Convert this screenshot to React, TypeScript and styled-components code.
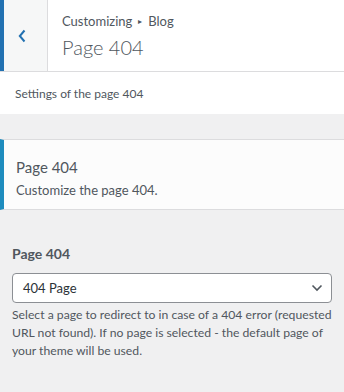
import React from "react";
import styled, { createGlobalStyle } from "styled-components";

const Global = createGlobalStyle`
  html, body { margin: 0; padding: 0; background: #f0f0f1; }
  body { font-family: Lato, "Noto Sans", sans-serif; color: #3c434a; }
  * { box-sizing: border-box; }
`;

const Panel = styled.div`
  width: 344px;
  height: 392px;
  background: #f0f0f1;
  display: flex;
  flex-direction: column;
`;

const Header = styled.div`
  display: flex;
  height: 72px;
  background: #fff;
  border-bottom: 1px solid #dcdcde;
`;

const BackButton = styled.div`
  width: 48px;
  background: #f6f7f7;
  border-left: 4px solid #2271b1;
  border-right: 1px solid #dcdcde;
  display: flex;
  align-items: center;
  justify-content: center;
  padding: 0 7px 0 0;
  color: #2271b1;
`;

const TitleBlock = styled.div`
  display: flex;
  flex-direction: column;
  padding: 11px 0 0 14px;
`;

const Crumb = styled.span`
  font-size: 13px;
  line-height: 20px;
  color: #50575e;
  display: flex;
  align-items: center;
  gap: 6px;
`;

const Arrow = styled.span`
  font-size: 8px;
`;

const PanelTitle = styled.h3`
  margin: 3px 0 0;
  font-size: 20px;
  font-weight: 300;
  line-height: 26px;
  color: #50575e;
`;

const InfoRow = styled.div`
  background: #fff;
  height: 42px;
  padding: 0 15px;
  display: flex;
  align-items: center;
  font-size: 12px;
  color: #50575e;
`;

const Gap = styled.div`
  height: 25px;
`;

const SectionCard = styled.div`
  background: #fcfcfc;
  border-top: 1px solid #dcdcde;
  border-bottom: 1px solid #dcdcde;
  border-left: 4px solid #1e8cbe;
  height: 71px;
  padding: 16px 12px 0;
  display: flex;
  flex-direction: column;
`;

const SectionTitle = styled.div`
  font-size: 15px;
  line-height: 22px;
  color: #50575e;
`;

const SectionDesc = styled.div`
  margin-top: 2px;
  font-size: 13px;
  line-height: 20px;
  color: #50575e;
`;

const Control = styled.div`
  padding: 33px 12px 0;
  display: flex;
  flex-direction: column;
`;

const Label = styled.label`
  font-size: 14px;
  font-weight: 700;
  line-height: 22px;
  color: #50575e;
`;

const Select = styled.div`
  margin-top: 8px;
  height: 30px;
  background: #fff;
  border: 1px solid #8c8f94;
  border-radius: 4px;
  display: flex;
  align-items: center;
  justify-content: space-between;
  padding: 0 8px 0 10px;
  font-size: 13px;
  color: #2c3338;
`;

const Help = styled.p`
  margin: 3px 0 0;
  font-size: 12.2px;
  line-height: 18px;
  color: #50575e;
`;

export default function App() {
  return (
    <Panel>
      <Global />
      <Header>
        <BackButton>
          <svg width="8" height="14" viewBox="0 0 8 14">
            <path d="M6.5 1.5 L1.8 7 L6.5 12.5" fill="none" stroke="currentColor" strokeWidth="2" />
          </svg>
        </BackButton>
        <TitleBlock>
          <Crumb>
            Customizing <Arrow>▸</Arrow> Blog
          </Crumb>
          <PanelTitle>Page 404</PanelTitle>
        </TitleBlock>
      </Header>
      <InfoRow>Settings of the page 404</InfoRow>
      <Gap />
      <SectionCard>
        <SectionTitle>Page 404</SectionTitle>
        <SectionDesc>Customize the page 404.</SectionDesc>
      </SectionCard>
      <Control>
        <Label>Page 404</Label>
        <Select>
          <span>404 Page</span>
          <svg width="12" height="8" viewBox="0 0 12 8">
            <path d="M1.5 1.5 L6 6 L10.5 1.5" fill="none" stroke="#50575e" strokeWidth="1.6" />
          </svg>
        </Select>
        <Help>
          Select a page to redirect to in case of a 404 error (requested URL not found). If no page is selected - the default page of your theme will be used.
        </Help>
      </Control>
    </Panel>
  );
}
